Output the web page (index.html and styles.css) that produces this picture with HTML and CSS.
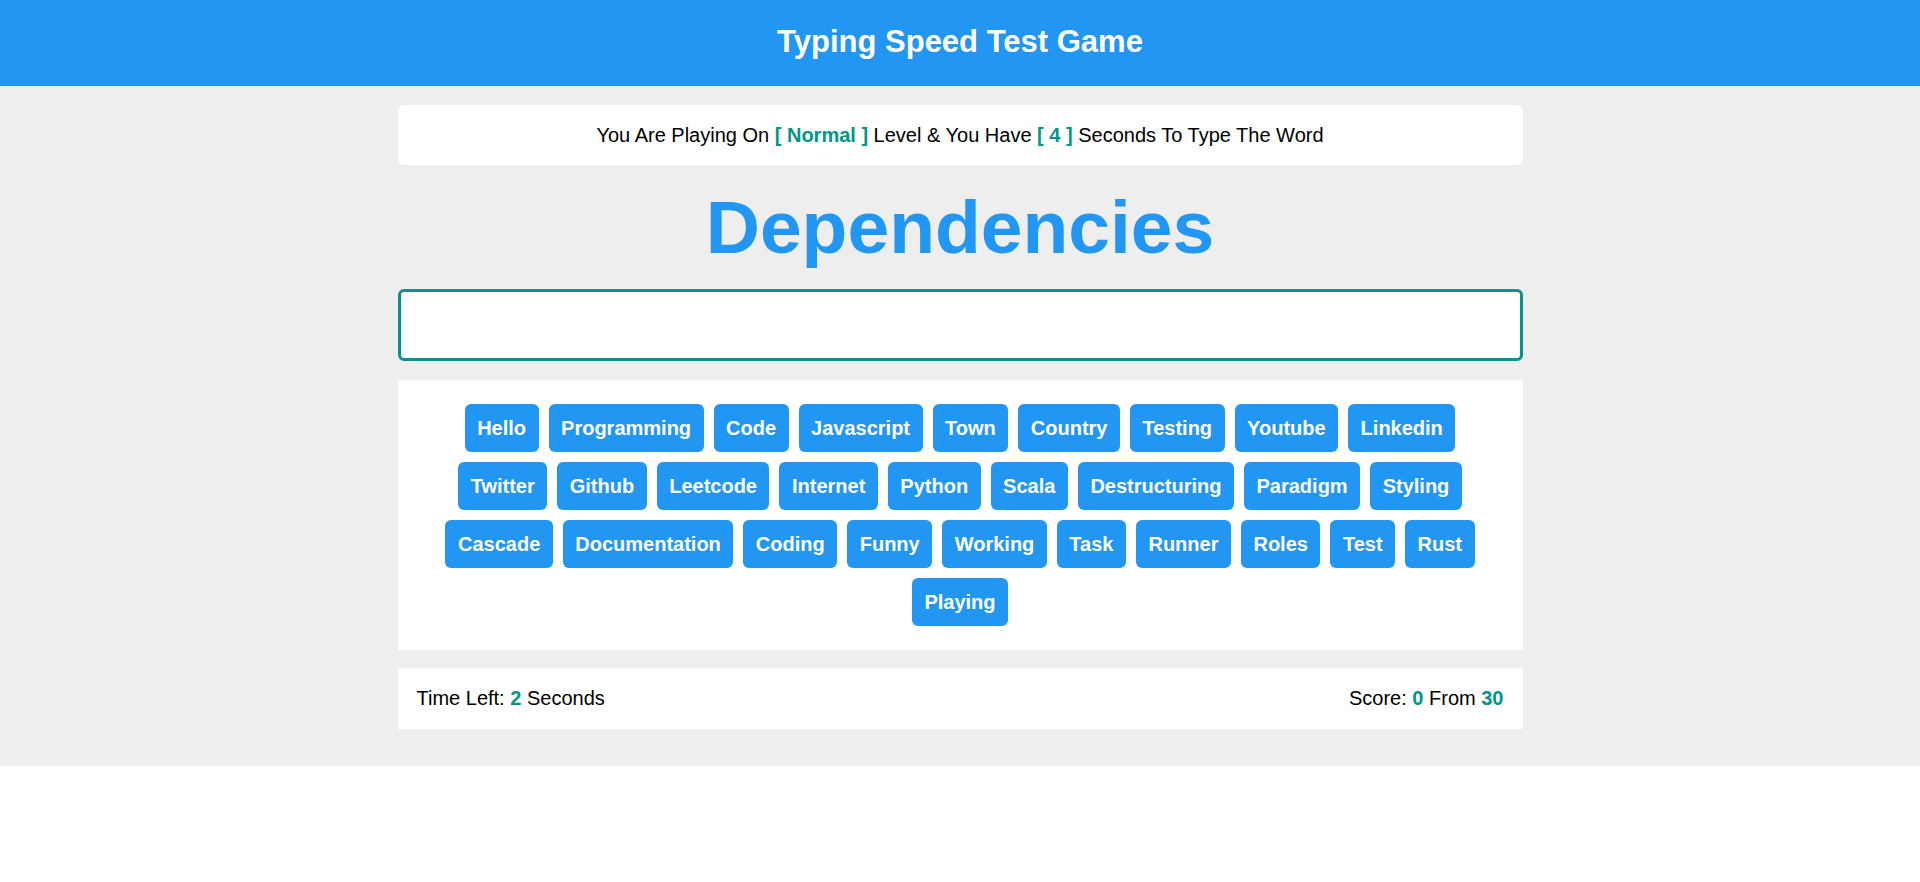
FILE: index.html
```html
<!DOCTYPE html>
<html lang="en">
<head>
<meta charset="UTF-8">
<title>Typing Speed Test Game</title>
<link rel="stylesheet" href="styles.css">
</head>
<body>
<header class="site-header">Typing Speed Test Game</header>
<main class="game">
  <div class="container">
    <div class="message">You Are Playing On <span class="lvl">[ Normal ]</span> Level &amp; You Have <span class="seconds">[ 4 ]</span> Seconds To Type The Word</div>
    <div class="the-word">Dependencies</div>
    <input class="input" type="text">
    <div class="upcoming-words">
      <span class="word">Hello</span>
      <span class="word">Programming</span>
      <span class="word">Code</span>
      <span class="word">Javascript</span>
      <span class="word">Town</span>
      <span class="word">Country</span>
      <span class="word">Testing</span>
      <span class="word">Youtube</span>
      <span class="word">Linkedin</span>
      <span class="word">Twitter</span>
      <span class="word">Github</span>
      <span class="word">Leetcode</span>
      <span class="word">Internet</span>
      <span class="word">Python</span>
      <span class="word">Scala</span>
      <span class="word">Destructuring</span>
      <span class="word">Paradigm</span>
      <span class="word">Styling</span>
      <span class="word">Cascade</span>
      <span class="word">Documentation</span>
      <span class="word">Coding</span>
      <span class="word">Funny</span>
      <span class="word">Working</span>
      <span class="word">Task</span>
      <span class="word">Runner</span>
      <span class="word">Roles</span>
      <span class="word">Test</span>
      <span class="word">Rust</span>
      <span class="word">Playing</span>
    </div>
    <div class="control">
      <div class="time">Time Left: <span class="hl">2</span> Seconds</div>
      <div class="score">Score: <span class="hl">0</span> From <span class="hl">30</span></div>
    </div>
  </div>
</main>
</body>
</html>
```
FILE: styles.css
```css
* {
  box-sizing: border-box;
}
body {
  margin: 0;
  font-family: "Liberation Sans", Arial, sans-serif;
  color: #000;
  background: #fff;
}
.site-header {
  background: #2196f3;
  color: #fff;
  font-weight: bold;
  font-size: 31px;
  height: 86px;
  padding-bottom: 2px;
  display: flex;
  align-items: center;
  justify-content: center;
}
.game {
  background: #eeeeee;
  padding: 19px 0 37px;
}
.container {
  width: 1125px;
  margin: 0 auto;
}
.message {
  background: #fff;
  border-radius: 6px;
  padding: 18px 20px;
  font-size: 20px;
  line-height: 24px;
  text-align: center;
}
.lvl,
.seconds {
  color: #009688;
  font-weight: bold;
}
.the-word {
  color: #2196f3;
  font-weight: bold;
  font-size: 75px;
  text-align: center;
  margin: 19px 0;
}
.input {
  display: block;
  width: 100%;
  height: 72px;
  border: 3px solid #009688;
  border-radius: 6px;
  background: #fff;
  outline: none;
  font-family: inherit;
  font-size: 24px;
  padding: 0 20px;
  margin: 0 0 19px;
}
.upcoming-words {
  background: #fff;
  padding: 24px 20px;
  display: flex;
  flex-wrap: wrap;
  justify-content: center;
  gap: 10px;
}
.word {
  background: #2196f3;
  color: #fff;
  font-weight: bold;
  font-size: 20px;
  line-height: 24px;
  padding: 11.5px 12.5px 12.5px;
  border-radius: 6px;
}
.control {
  margin-top: 18px;
  background: #fff;
  padding: 18px 19px 19px 19px;
  font-size: 20px;
  line-height: 24px;
  display: flex;
  justify-content: space-between;
}
.hl {
  color: #009688;
  font-weight: bold;
}
```
